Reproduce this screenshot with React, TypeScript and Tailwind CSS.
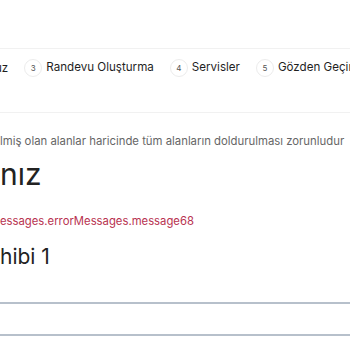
import React from "react";

function Step({ n, label }: { n: string; label: string }) {
  return (
    <div className="flex items-center gap-[4px] shrink-0">
      <span className="w-[18px] h-[18px] rounded-full border border-[#ececec] flex items-center justify-center text-[8px] text-[#555]">
        {n}
      </span>
      <span className="text-[11.6px] text-[#1f1f1f] whitespace-nowrap">{label}</span>
    </div>
  );
}

export default function App() {
  return (
    <div className="w-[350px] h-[350px] overflow-hidden bg-white font-['Inter',sans-serif] text-[#222]">
      <div className="h-[48px]" />
      <div className="h-[65px] border-y border-[#f1f1f1] pt-[10px] flex items-start gap-[16px] -ml-[5px] w-[420px]">
        <span className="text-[11.6px] leading-[18px] text-[#1f1f1f] whitespace-nowrap">uz</span>
        <Step n="3" label="Randevu Oluşturma" />
        <Step n="4" label="Servisler" />
        <Step n="5" label="Gözden Geçirme" />
      </div>
      <div className="mt-[20px] text-[11.35px] leading-[16px] text-[#666] whitespace-nowrap">
        lmiş olan alanlar haricinde tüm alanların doldurulması zorunludur
      </div>
      <div className="mt-[5px] text-[30px] leading-[40px] text-[#222] whitespace-nowrap">nız</div>
      <div className="mt-[17px] text-[11.3px] leading-[20px] text-[#b83250] whitespace-nowrap">
        essages.errorMessages.message68
      </div>
      <div className="mt-[10px] text-[21px] leading-[32px] text-[#222] whitespace-nowrap">hibi 1</div>
      <div className="mt-[29px] h-[34px] border-y-2 border-[#b7c0cb] bg-white" />
    </div>
  );
}
